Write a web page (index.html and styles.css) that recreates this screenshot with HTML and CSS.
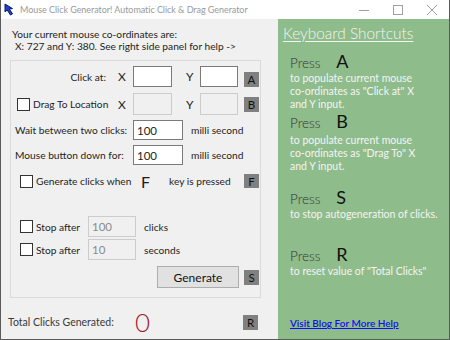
FILE: index.html
```html
<!DOCTYPE html>
<html lang="en">

<head>
    <meta charset="UTF-8">
    <meta name="viewport" content="width=device-width, initial-scale=1.0">
    <title>Mouse Click Generator</title>
    <link rel="stylesheet" href="styles.css">
</head>

<body>
    <div class="window">
        <!-- title bar -->
        <div class="titlebar">
            <svg class="app-icon" width="12" height="13" viewBox="0 0 12 13">
                <path d="M1 1 L1 9 L3.2 7 L6.5 12 L8.5 10.8 L5.3 6 L8.5 5.6 Z" fill="#1f3fd0" stroke="#0a1a60" stroke-width="1"/>
            </svg>
            <span class="title">Mouse Click Generator! Automatic Click &amp; Drag Generator</span>
            <div class="controls">
                <svg width="12" height="12" viewBox="0 0 12 12"><line x1="1" y1="6.5" x2="11" y2="6.5" stroke="#a0a0a0"/></svg>
                <svg width="12" height="12" viewBox="0 0 12 12"><rect x="1.5" y="1.5" width="9" height="9" fill="none" stroke="#a0a0a0"/></svg>
                <svg width="12" height="12" viewBox="0 0 12 12"><path d="M1 1 L11 11 M11 1 L1 11" stroke="#a0a0a0"/></svg>
            </div>
        </div>

        <div class="main">
            <div class="left">
                <div class="info">
                    <div>Your current mouse co-ordinates are:</div>
                    <div class="coords">X: 727 and Y: 380. See right side panel for help -&gt;</div>
                </div>

                <div class="group">
                    <div class="row row-click">
                        <div class="lab lab-right">Click at:</div>
                        <div class="axis">X</div>
                        <div class="input small"></div>
                        <div class="axis axis-y">Y</div>
                        <div class="input small narrow"></div>
                        <div class="key key-bottom">A</div>
                    </div>
                    <div class="row row-drag">
                        <div class="lab"><span class="check"></span>Drag To Location</div>
                        <div class="axis">X</div>
                        <div class="input small disabled"></div>
                        <div class="axis axis-y">Y</div>
                        <div class="input small narrow disabled"></div>
                        <div class="key">B</div>
                    </div>
                    <div class="row row-wait">
                        <div class="lab-wide">Wait between two clicks:</div>
                        <div class="input mid">100</div>
                        <div class="unit">milli second</div>
                    </div>
                    <div class="row row-down">
                        <div class="lab-wide">Mouse button down for:</div>
                        <div class="input mid">100</div>
                        <div class="unit">milli second</div>
                    </div>
                    <div class="row row-hotkey">
                        <span class="check"></span>
                        <span class="hk-text">Generate clicks when</span>
                        <span class="hk-letter">F</span>
                        <span class="hk-tail">key is pressed</span>
                        <div class="key">F</div>
                    </div>
                    <div class="row row-stop1">
                        <span class="check"></span>
                        <span class="stop-text">Stop after</span>
                        <div class="input stop disabled">100</div>
                        <div class="unit">clicks</div>
                    </div>
                    <div class="row row-stop2">
                        <span class="check"></span>
                        <span class="stop-text">Stop after</span>
                        <div class="input stop disabled">10</div>
                        <div class="unit">seconds</div>
                    </div>
                    <div class="row row-gen">
                        <button class="generate">Generate</button>
                        <div class="key">S</div>
                    </div>
                </div>

                <div class="total">
                    <span class="total-label">Total Clicks Generated:</span>
                    <span class="total-num">0</span>
                    <div class="key">R</div>
                </div>
            </div>

            <div class="right">
                <div class="heading">Keyboard Shortcuts</div>

                <div class="shortcut sc-a">
                    <div class="press">Press <b>A</b></div>
                    <div class="desc">to populate current mouse co&#8209;ordinates as "Click at" X and Y input.</div>
                </div>
                <div class="shortcut sc-b">
                    <div class="press">Press <b>B</b></div>
                    <div class="desc">to populate current mouse co&#8209;ordinates as "Drag To" X and Y input.</div>
                </div>
                <div class="shortcut sc-s">
                    <div class="press">Press <b>S</b></div>
                    <div class="desc wide">to stop autogeneration of clicks.</div>
                </div>
                <div class="shortcut sc-r">
                    <div class="press">Press <b>R</b></div>
                    <div class="desc wide">to reset value of "Total Clicks"</div>
                </div>

                <a class="blog" href="#">Visit Blog For More Help</a>
            </div>
        </div>
    </div>
</body>

</html>
```

FILE: styles.css
```css
body {
    margin: 0;
    padding: 0;
    font-family: Lato, "Liberation Sans", sans-serif;
    font-size: 10.2px;
    color: #1e1e1e;
}

.window {
    width: 448px;
    height: 339px;
    border: 1px solid #5a5a5a;
    border-top: none;
    display: flex;
    flex-direction: column;
    background-color: #f0f0f0;
}

/* title bar */
.titlebar {
    height: 19px;
    background-color: #ffffff;
    display: flex;
    align-items: center;
}

.app-icon {
    margin-left: 3px;
    margin-right: 4px;
}

.title {
    color: #9a9a9a;
    font-size: 9px;
    letter-spacing: -0.05px;
    white-space: nowrap;
}

.controls {
    margin-left: auto;
    display: flex;
    gap: 22px;
    margin-right: 11px;
}

/* main area */
.main {
    flex: 1;
    display: flex;
}

.left {
    width: 277px;
    display: flex;
    flex-direction: column;
}

.info {
    padding: 9px 0 0 11px;
    line-height: 12px;
}

.coords {
    padding-left: 3px;
}

.group {
    margin: 8px 0 0 9px;
    width: 249px;
    height: 236px;
    border: 1px solid #dadada;
}

.row {
    display: flex;
    align-items: center;
}

.row-click { margin-top: 5px; height: 21px; }
.row-drag { margin-top: 6px; height: 22px; }
.row-wait { margin-top: 5px; height: 20px; }
.row-down { margin-top: 5px; height: 20px; }
.row-hotkey { margin-top: 8px; height: 16px; padding-left: 9px; }
.row-stop1 { margin-top: 27px; height: 21px; padding-left: 9px; }
.row-stop2 { margin-top: 2px; height: 21px; padding-left: 9px; }
.row-gen { margin-top: 6px; height: 22px; padding-left: 146px; }

.lab {
    width: 97px;
    padding-left: 6px;
    box-sizing: border-box;
    display: flex;
    align-items: center;
    white-space: nowrap;
}

.lab-right {
    justify-content: flex-end;
    padding-right: 2px;
}

.lab-wide {
    width: 122px;
    padding-left: 4px;
    box-sizing: border-box;
    white-space: nowrap;
}

.axis {
    margin-left: 10px;
    width: 15px;
    font-size: 12px;
}

.axis-y {
    margin-left: 14px;
    width: 14px;
}

.input {
    box-sizing: border-box;
    background-color: #ffffff;
    border: 1px solid #7a7a7a;
    font-size: 11.5px;
    padding-left: 3px;
    display: flex;
    align-items: center;
}

.input.small { width: 39px; height: 21px; }
.input.narrow { width: 38px; }
.row-drag .input.small { height: 22px; }
.input.mid { width: 50px; height: 20px; }
.input.stop { width: 48px; height: 21px; }

.input.disabled {
    background-color: #f0f0f0;
    border-color: #cccccc;
    color: #8a8a8a;
}

.unit {
    margin-left: 8px;
}

.key {
    margin-left: 6px;
    width: 15px;
    height: 15px;
    background-color: #808080;
    color: #111111;
    font-size: 11.5px;
    display: flex;
    align-items: center;
    justify-content: center;
}

.key-bottom {
    align-self: flex-end;
}

.check {
    display: inline-block;
    width: 11px;
    height: 11px;
    border: 1px solid #333333;
    background-color: #ffffff;
    margin-right: 3px;
    flex-shrink: 0;
}

.hk-text {
    width: 105px;
    white-space: nowrap;
}

.hk-letter {
    font-size: 16px;
    width: 28px;
}

.hk-tail {
    width: 75px;
    white-space: nowrap;
}

.row-hotkey .key {
    margin-left: 0;
    height: 14px;
}

.stop-text {
    white-space: nowrap;
    width: 52px;
}

.generate {
    width: 82px;
    height: 22px;
    background-color: #e1e1e1;
    border: 1px solid #adadad;
    font-family: Lato, "Liberation Sans", sans-serif;
    font-size: 12px;
    color: #111111;
    padding: 0;
}

.row-gen .key {
    margin-left: 5px;
}

.total {
    margin-top: 14px;
    height: 20px;
    display: flex;
    align-items: center;
    padding-left: 7px;
}

.total-label {
    width: 127px;
    font-size: 10.5px;
    color: #3a3a3a;
    white-space: nowrap;
}

.total-num {
    font-size: 26px;
    color: #a0202a;
    font-weight: 300;
    width: 108px;
}

.total .key {
    margin-left: 0;
}

/* right help panel */
.right {
    flex: 1;
    background-color: #8fbc8b;
    display: flex;
    flex-direction: column;
    padding-left: 5px;
    color: #f4f4f4;
}

.heading {
    margin-top: 3px;
    font-size: 15.4px;
    line-height: 22px;
    font-weight: 300;
    text-decoration: underline;
    text-underline-offset: 2px;
    color: #f4f4f4;
}

.shortcut {
    padding-left: 7px;
}

.press {
    font-size: 13.5px;
    line-height: 16px;
    color: #333333;
    font-weight: 300;
}

.press b {
    font-weight: 400;
    font-size: 18px;
    color: #111111;
    margin-left: 12px;
}

.desc {
    width: 128px;
    line-height: 13px;
    font-size: 10.5px;
}

.desc.wide {
    width: 150px;
}

.sc-a { margin-top: 9px; }
.sc-a .desc { margin-top: 1px; }
.sc-b { margin-top: 2px; }
.sc-b .desc { margin-top: 3px; }
.sc-s { margin-top: 16px; }
.sc-s .desc { margin-top: 1px; }
.sc-r { margin-top: 25px; }
.sc-r .desc { margin-top: 1px; }

.blog {
    margin-top: auto;
    margin-bottom: 10px;
    padding-left: 7px;
    color: #1010ee;
    font-size: 10px;
    font-weight: 600;
}
```
